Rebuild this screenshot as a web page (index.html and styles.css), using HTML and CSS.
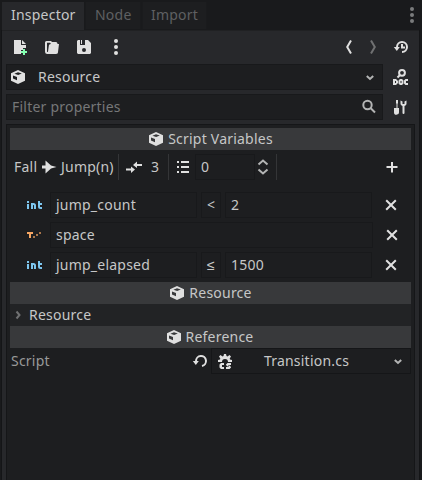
FILE: index.html
```html
<!DOCTYPE html>
<html lang="en">
<head>
<meta charset="utf-8">
<title>Inspector</title>
<link rel="stylesheet" href="styles.css">
</head>
<body>
<svg class="defs" aria-hidden="true">
  <symbol id="cube" viewBox="0 0 16 16"><path fill-rule="evenodd" d="M8 1 1 4.200v7.600L8 15l7-3.200V4.200zM8 3.200 11.800 4.500 8.200 6 4.400 4.800zM3 6.500 7 8v3.200L3 9.600z"/></symbol>
  <symbol id="chev" viewBox="0 0 16 16"><path class="line" d="m4.800 7 3.200 3 3.200-3"/></symbol>
  <symbol id="dots" viewBox="0 0 16 16"><circle cx="8" cy="2" r="2"/><circle cx="8" cy="8" r="2"/><circle cx="8" cy="14" r="2"/></symbol>
  <symbol id="close" viewBox="0 0 16 16"><path class="line" d="m3.200 3.200 9.600 9.600m0-9.600-9.600 9.600"/></symbol>
  <symbol id="int" viewBox="0 0 16 16"><path d="M1 4h2v2H1zM1 7h2v5H1zM5 6h2.500A2.500 2.500 0 0 1 10 8.500V12H8V8.500Q8 8 7.500 8H7v4H5zM12 4h2v2h2v2h-2v1.500q0 .5.5.5H16v2h-1.500A2.500 2.500 0 0 1 12 9.500z"/></symbol>
</svg>
<div class="dock">
  <nav class="tabs">
    <div class="tab active">Inspector</div>
    <div class="tab node">Node</div>
    <div class="tab import">Import</div>
    <svg class="icon menu"><use href="#dots"/></svg>
  </nav>
  <main class="panel">
    <div class="toolbar">
      <svg class="icon" viewBox="0 0 16 16"><path d="M2 1h7v5h5v3h-3v2H9v4H2zM10 1l4 4h-4z"/><path class="green" d="M11 10h2v2h2v2h-2v2h-2v-2H9v-2h2z"/></svg>
      <svg class="icon" viewBox="0 0 16 16"><path d="M2.500 2A1.500 1.500 0 0 0 1 3.500v9A2.300 2.300 0 0 0 3 15h9c1.500 0 2-1 2-2l1-8H7c-2 0-2 1-2.200 2L4 12.500c-.2.700-1 .7-1 0V3.700h3l1 1.300h6.500C13.500 3.500 12.500 3 11.500 3H8L7 2z"/></svg>
      <svg class="icon" viewBox="0 0 16 16"><path fill-rule="evenodd" d="M2 1 1 2v12l1 1h12l1-1V4l-3-3H9v5H4V1zM8 9a2 2 0 1 1 0 4 2 2 0 0 1 0-4z"/><path d="M5 1h1v4H5z"/></svg>
      <svg class="icon" viewBox="0 0 16 16"><use href="#dots"/></svg>
      <span class="spacer"></span>
      <svg class="icon" viewBox="0 0 16 16"><path class="line" d="M10 1.500 6.200 8 10 14.500"/></svg>
      <svg class="icon dim" viewBox="0 0 16 16"><path class="line" d="M6 1.500 9.800 8 6 14.500"/></svg>
      <svg class="icon history" viewBox="0 0 16 16"><path class="line" d="M4 9.500V8a5 5 0 1 1 5 5M9 5v3.500h3"/><path d="M.8 8h6L3.800 12z"/></svg>
    </div>
    <div class="selectors">
      <div class="field object"><svg class="icon"><use href="#cube"/></svg><span class="name">Resource</span><span class="spacer"></span><svg class="icon soft"><use href="#chev"/></svg></div>
      <svg class="icon" viewBox="0 0 16 16"><circle class="line" cx="9" cy="3.800" r="2.900"/><path class="line" d="M7 6 4.500 8.500"/><path fill-rule="evenodd" d="M0 10h3l2 2v2l-2 2H0zm2 2v2h1v-2zM7 10h2l1.500 1.500v3L9 16H7l-1.500-1.500v-3zm.5 2v2h1v-2zM12.500 10H15v2h-2v2h2v2h-2.500L11 14.500v-3z"/></svg>
      <div class="field filter"><span>Filter properties</span><span class="spacer"></span><svg class="icon soft" viewBox="0 0 16 16"><circle class="line" cx="6.500" cy="6" r="4.200"/><path class="line" d="m9.500 9 4.500 4.500"/></svg></div>
      <svg class="icon" viewBox="0 0 16 16"><path d="M3 1h2v3l-.5 1v4H6v4.500a2 2 0 0 1-2 2 2 2 0 0 1-3-2V9h2.500V5L3 4zM7.500 1.500v3c0 1.500 1 2 2 2.500v7a1 1 0 0 0 2 0V7c1.500-.5 2-1.500 2-2.500v-3l-2 1V5h-2V2.500z"/></svg>
    </div>
    <section class="properties">
      <h2 class="category"><svg class="icon"><use href="#cube"/></svg><span>Script Variables</span></h2>
      <div class="transition">
        <span class="from">Fall</span>
        <svg class="icon arrow" viewBox="0 0 16 16"><path d="M1 6.500h3.500v-5l5.500 5L15.500 8 10 9.500l-5.500 5v-5H1z"/></svg>
        <span class="to">Jump(n)</span>
        <i class="sep"></i>
        <svg class="icon priority" viewBox="0 0 16 16"><path d="M16 5h-5V2.500L7 6l4 3V7h5zM0 9.500h5v-2l4 3-4 3.500v-2.500H0z"/></svg>
        <span class="count">3</span>
        <i class="sep"></i>
        <svg class="icon list" viewBox="0 0 16 16"><path d="M2 2h2v2H2zm4 0h8v2H6zM2 7h2v2H2zm4 0h8v2H6zM2 12h2v2H2zm4 0h8v2H6z"/></svg>
        <div class="field spin">0</div>
        <svg class="icon soft updown" viewBox="0 0 16 16"><path class="line" d="m3.500 5.500 4.500-4 4.500 4m-9 5 4.500 4 4.500-4"/></svg>
        <i class="sep"></i>
        <span class="spacer"></span>
        <svg class="icon" viewBox="0 0 16 16"><path d="M7 3h2v4h4.500v2H9v4.500H7V9H2.500V7H7z"/></svg>
      </div>
      <div class="conditions">
        <div class="condition"><svg class="icon blue"><use href="#int"/></svg><div class="field">jump_count</div><div class="field op">&lt;</div><div class="field">2</div><svg class="icon remove"><use href="#close"/></svg></div>
        <div class="condition trigger"><svg class="icon orange" viewBox="0 0 16 16"><path d="M1 5h6v2H5v4H3V7H1z"/><path class="fade" d="M7 9h2v2H7zm3-2h2v2h-2zm3-2h2v2h-2z"/></svg><div class="field">space</div><svg class="icon remove"><use href="#close"/></svg></div>
        <div class="condition"><svg class="icon blue"><use href="#int"/></svg><div class="field">jump_elapsed</div><div class="field op">≤</div><div class="field">1500</div><svg class="icon remove"><use href="#close"/></svg></div>
      </div>
      <h2 class="category"><svg class="icon"><use href="#cube"/></svg><span>Resource</span></h2>
      <div class="group"><svg class="icon dim" viewBox="0 0 16 16"><path class="line" d="m6.500 4.500 3 3.500-3 3.500"/></svg><span>Resource</span></div>
      <h2 class="category reference"><svg class="icon"><use href="#cube"/></svg><span>Reference</span></h2>
      <div class="property"><span class="label">Script</span>
        <svg class="icon" viewBox="0 0 16 16"><path class="line" d="M4 9.500V8a5 5 0 1 1 6 4.900"/><path d="M.8 8h6L3.800 12z"/></svg>
        <div class="field script"><svg class="icon" viewBox="0 0 16 16"><path d="M7 1h2l.5 2 1 .4L12.500 2 14 3.500l-1.300 2 .3 1 2 .5v2h-4a3 3 0 0 0-6 0H1V7l2-.5.3-1L2 3.500 3.500 2l2 1.400 1-.4z"/><path d="M4 10h3v2H5v2h2v2H4l-1.500-1.500v-3zM10.500 10H14v2h-3v.5h1.500L14 14v.5L12.500 16H9v-2h3v-.5h-1.500L9 12v-.5z"/></svg><span>Transition.cs</span><svg class="icon soft"><use href="#chev"/></svg></div>
      </div>
    </section>
  </main>
</div>
</body>
</html>
```

FILE: styles.css
```css
* { box-sizing: border-box; }
body {
  margin: 0;
  height: 480px;
  overflow: hidden;
  background: #191a1c;
  color: #c6c7c7;
  font: 14px/20px "Noto Sans", sans-serif;
  letter-spacing: .22px;
}
.defs { display: none; }
.dock { height: 480px; padding: 2px 3px 0 2px; display: flex; flex-direction: column; }
.icon { width: 16px; height: 16px; flex: none; fill: #e0e0e0; stroke: #e0e0e0; stroke-width: 0; overflow: visible; display: block; }
.line { fill: none; stroke-width: 2; }
.soft { fill: #b3b4b4; stroke: #b3b4b4; }
.dim { fill: #707172; stroke: #707172; }
.blue { fill: #7dc6ef; }
.orange { fill: #f5a663; }
.fade { opacity: .65; }
.green { fill: #84ffb1; }
.spacer { flex: 1; }

.tabs { display: flex; height: 28px; gap: 1px; }
.tab { height: 27px; padding: 3px 9px; background: #1d1e20; color: #5f6062; white-space: nowrap; border: 1px solid #1a1b1d; border-width: 0 1px; }
.tab.active { width: 82px; height: 28px; background: #27282b; color: #c6c7c7; padding-left: 8px; border-color: #27282b; }
.tab.node { width: 56px; }
.tab.import { width: 65px; padding-left: 8px; }
.menu { margin: 5px -1px 0 auto; fill: #7a7b7c; }

.panel { flex: 1; min-height: 0; display: flex; flex-direction: column; padding: 0 4px; background: #27282b; border-top: 1px solid #202123; box-shadow: 0 0 0 1px #141517; clip-path: inset(0 -1px -1px -1px); }
.toolbar { height: 33px; flex: none; display: flex; gap: 16px; padding: 8px 6px 0; }
.toolbar .dim { margin-left: -8px; }
.toolbar .history { margin-left: -4px; }
.selectors { display: grid; grid-template-columns: 377px 16px; column-gap: 10px; row-gap: 4px; align-items: center; }
.field { height: 26px; background: #1d1e20; border: 1px solid #18191b; padding: 2px 5px; display: flex; align-items: center; white-space: nowrap; min-width: 0; }
.object { padding: 2px 4px 2px 3px; }
.object .name { margin-left: 12px; }
.filter { color: #767778; padding: 2px 5px; }

.properties { flex: 1; margin-top: 4px; background: #1d1e20; border: 1px solid #151618; border-bottom: 0; padding: 3px 3px 0; overflow: hidden; width: 409px; }
.category { margin: 0; height: 22px; display: flex; align-items: center; justify-content: center; gap: 4px; background: #38393b; font: inherit; width: 401px; }
.reference { padding-right: 2px; }
.transition { height: 26px; margin: 4px 0 12px; padding: 0 11px 0 4px; display: flex; align-items: center; }
.from { width: 27px; }
.arrow { margin-right: 4px; }
.to { width: 57px; }
.sep { width: 1px; height: 26px; background: #343537; }
.priority { margin-left: 7px; }
.count { width: 8px; margin: 0 9px; }
.list { margin: 0 4px 0 6px; }
.spin { width: 60px; }
.updown { margin-right: 5px; }
.conditions { display: grid; gap: 4px; margin-bottom: 4px; }
.condition { display: grid; grid-template-columns: 20px 147px 20px 147px 16px; column-gap: 4px; align-items: center; padding-left: 16px; }
.trigger { grid-template-columns: 20px 323px 16px; }
.remove { margin-left: 7px; }
.op { justify-content: center; padding: 2px; }
.group { height: 22px; display: flex; align-items: center; gap: 3px; background: #222325; width: 401px; }
.property { display: flex; align-items: center; height: 26px; width: 401px; }
.label { width: 182px; padding-left: 1px; color: #989999; }
.script { width: 200px; margin-left: 3px; padding: 2px 4px 2px 5px; border-color: #151618; }
.script span { flex: 1; text-align: center; padding-right: 10px; }
```
